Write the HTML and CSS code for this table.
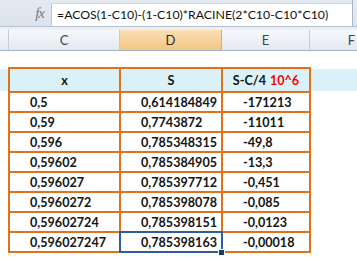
FILE: index.html
```html
<!DOCTYPE html>
<html lang="fr">
<head>
<meta charset="utf-8">
<title>Feuille de calcul</title>
<link rel="stylesheet" href="styles.css">
</head>
<body>
<div class="app">
  <div class="formula-bar">
    <div class="fx-area"><span class="fx">fx</span></div>
    <div class="formula-input">=ACOS(1-C10)-(1-C10)*RACINE(2*C10-C10*C10)</div>
    <div class="fb-end"></div>
  </div>
  <div class="col-headers">
    <div class="corner"></div>
    <div class="col-h col-c">C</div>
    <div class="col-h col-d active">D</div>
    <div class="col-h col-e">E</div>
    <div class="col-h col-f">F</div>
  </div>
  <div class="sheet">
    <div class="data-grid">
      <div class="cell head">x</div>
      <div class="cell head">S</div>
      <div class="cell head">S-C/4 <span class="red">10^6</span></div>

      <div class="cell">0,5</div>
      <div class="cell">0,614184849</div>
      <div class="cell">-171213</div>

      <div class="cell">0,59</div>
      <div class="cell">0,7743872</div>
      <div class="cell">-11011</div>

      <div class="cell">0,596</div>
      <div class="cell">0,785348315</div>
      <div class="cell">-49,8</div>

      <div class="cell">0,59602</div>
      <div class="cell">0,785384905</div>
      <div class="cell">-13,3</div>

      <div class="cell">0,596027</div>
      <div class="cell">0,785397712</div>
      <div class="cell">-0,451</div>

      <div class="cell">0,5960272</div>
      <div class="cell">0,785398078</div>
      <div class="cell">-0,085</div>

      <div class="cell">0,59602724</div>
      <div class="cell">0,785398151</div>
      <div class="cell">-0,0123</div>

      <div class="cell">0,596027247</div>
      <div class="cell selected">0,785398163</div>
      <div class="cell">-0,00018</div>
    </div>
  </div>
</div>
</body>
</html>
```

FILE: styles.css
```css
html, body {
  margin: 0;
  padding: 0;
  background: #ffffff;
}

.app {
  width: 357px;
  height: 260px;
  overflow: hidden;
  font-family: Lato, "Liberation Sans", sans-serif;
  color: #141414;
}

/* Formula bar */
.formula-bar {
  display: flex;
  height: 27px;
  box-sizing: border-box;
  background: linear-gradient(#e4eaf2, #dbe3ed);
  border-bottom: 1px solid #b3c1d2;
}

.fx-area {
  width: 51px;
  display: flex;
  align-items: center;
  justify-content: flex-end;
  padding-right: 7px;
  box-sizing: border-box;
}

.fx {
  font-family: "Liberation Serif", serif;
  font-style: italic;
  font-size: 15px;
  color: #6f7b8a;
  letter-spacing: -1px;
}

.formula-input {
  flex: 1;
  margin-top: 3px;
  background: #ffffff;
  border-left: 1px solid #b9c6d6;
  border-top: 1px solid #cfd8e3;
  padding-left: 5px;
  font-size: 12.3px;
  line-height: 22px;
  color: #111;
  white-space: nowrap;
  overflow: hidden;
}

.fb-end {
  width: 4px;
  border-left: 1px solid #a7b5c7;
}

/* Column headers */
.col-headers {
  display: flex;
  height: 24px;
  box-sizing: border-box;
  border-top: 3px solid #eceff4;
  border-bottom: 1px solid #9fb2c8;
  background: linear-gradient(#f6f8fb, #e4e9f0);
}

.corner,
.col-h {
  border-right: 1px solid #c3cdda;
  box-sizing: content-box;
}

.corner { width: 8px; }

.col-h {
  display: flex;
  align-items: center;
  justify-content: center;
  font-size: 13px;
  color: #3a4657;
}

.col-c { width: 110px; }
.col-d { width: 101px; }
.col-e { width: 87px; }
.col-f { flex: 1; border-right: none; justify-content: flex-end; padding-right: 2px; }

.col-h.active {
  background: linear-gradient(#fae0b4, #f3c683);
  border-right-color: #d9ac6e;
  color: #2c2c2c;
}

/* Sheet */
.sheet {
  padding: 16px 0 0 8px;
  height: 193px;
  box-sizing: border-box;
  background: linear-gradient(to bottom,
    #ffffff 0, #ffffff 18px,
    #daf1f8 18px, #daf1f8 40px,
    #ffffff 40px);
}

.data-grid {
  display: grid;
  grid-template-columns: 109px 100px 86px;
  grid-template-rows: 22px repeat(8, 18px);
  gap: 2px;
  padding: 2px;
  width: max-content;
  background: #e2711c;
}

.cell {
  background: #ffffff;
  padding-left: 20px;
  display: flex;
  align-items: center;
  font-size: 12.6px;
  font-weight: 700;
  white-space: nowrap;
  position: relative;
}

.cell.head {
  background: #daf1f8;
  justify-content: center;
  padding-left: 0;
}

.red { color: #ff0000; margin-left: 4px; }

.cell.selected::after {
  content: "";
  position: absolute;
  left: -2px;
  top: -2px;
  right: -2px;
  bottom: -2px;
  border: 2px solid #2d5d9f;
}

.cell.selected::before {
  content: "";
  position: absolute;
  right: -4px;
  bottom: -5px;
  width: 5px;
  height: 5px;
  background: #1d3b66;
  border: 1px solid #ffffff;
  z-index: 2;
}
```
